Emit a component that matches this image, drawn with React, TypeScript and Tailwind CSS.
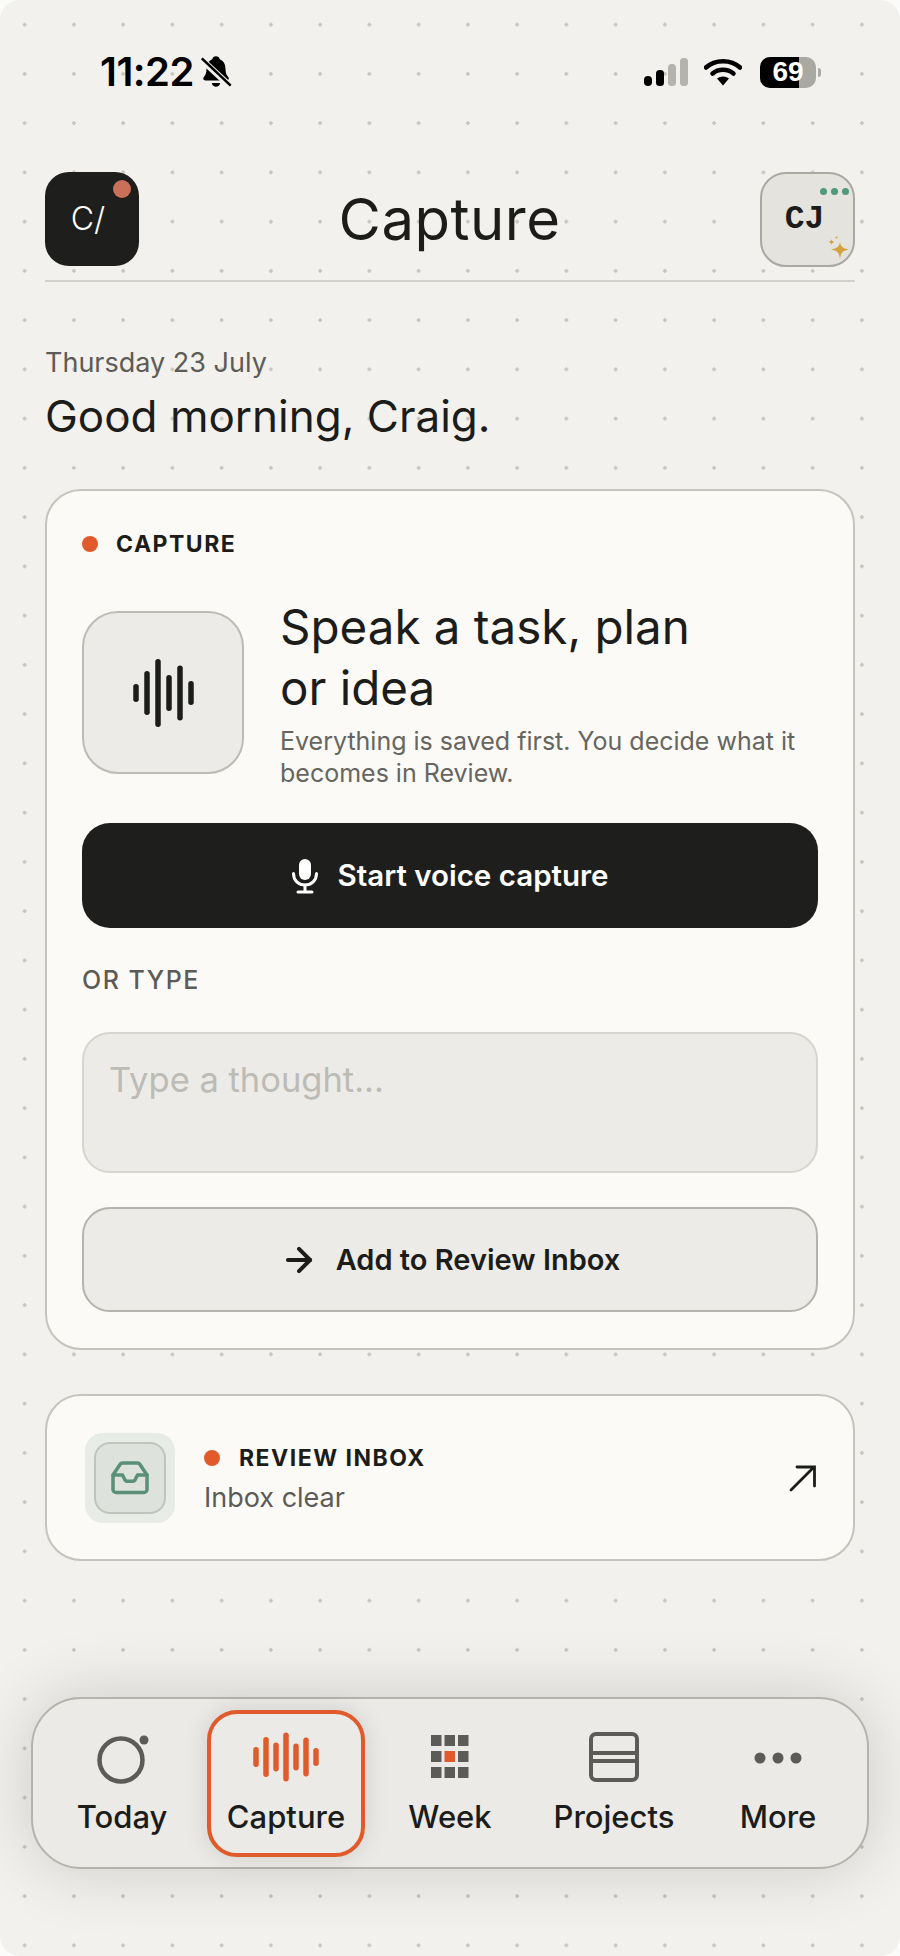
import { ArrowRight } from "lucide-react";

const FONT = "font-['Inter',_'Noto_Sans',_sans-serif]";

const CAPTURE_BARS = [
  { x: 3, h: 18 },
  { x: 14, h: 44 },
  { x: 25, h: 68 },
  { x: 36, h: 36 },
  { x: 47, h: 55 },
  { x: 58, h: 24 },
];

const NAV_BARS = [
  { x: 3, h: 20 },
  { x: 13, h: 40 },
  { x: 23, h: 29 },
  { x: 33, h: 49 },
  { x: 43, h: 27 },
  { x: 53, h: 39 },
  { x: 63, h: 18 },
];

function Bars({ bars, width, height, color }: { bars: { x: number; h: number }[]; width: number; height: number; color: string }) {
  return (
    <svg width={width} height={height} viewBox={`0 0 ${width} ${height}`}>
      {bars.map((b) => (
        <rect key={b.x} x={b.x - 2.75} y={(height - b.h) / 2} width={5.5} height={b.h} rx={2.75} fill={color} />
      ))}
    </svg>
  );
}

function BellOff() {
  return (
    <svg width="30" height="32" viewBox="0 0 30 32" className="ml-[7px] scale-[1.05]">
      <path d="M15 1c2 0 3.2 1.2 3.6 2.8 3.6 1.4 5.4 4.6 5.4 8.8 0 4 1 6.400 2.600 8.200 1.200 1.400 0.400 3.200-1.400 3.200H4.800c-1.800 0-2.600-1.800-1.400-3.200C5 19 6 16.600 6 12.600c0-4.200 1.800-7.400 5.400-8.800C11.800 2.200 13 1 15 1z" fill="#000" />
      <path d="M11 26.500h8c-.4 2.400-2 3.500-4 3.500s-3.600-1.100-4-3.500z" fill="#000" />
      <path d="M1 4l28 26" stroke="#f2f1ed" strokeWidth="6" />
      <path d="M1.500 3l27.500 26" stroke="#000" strokeWidth="2.500" />
    </svg>
  );
}

function StatusIcons() {
  return (
    <div className="flex items-center">
      <svg width="44" height="28" viewBox="0 0 44 28">
        <rect x="0" y="18" width="8" height="10" rx="4" fill="#000" />
        <rect x="12" y="12" width="8" height="16" rx="3.500" fill="#000" />
        <rect x="24" y="6" width="8" height="22" rx="3.500" fill="#b4b3ad" />
        <rect x="36" y="0" width="8" height="28" rx="3.500" fill="#b4b3ad" />
      </svg>
      <svg width="38" height="28" viewBox="0 0 38 28" className="ml-[16px]">
        <path d="M2 9.500C11 1 27 1 36 9.500" fill="none" stroke="#000" strokeWidth="4.500" strokeLinecap="round" />
        <path d="M8.500 15.500c6-5 15-5 21 0" fill="none" stroke="#000" strokeWidth="4.500" strokeLinecap="round" />
        <path d="M13 20.500c3.500-2.800 8.500-2.800 12 0L19 27.500z" fill="#000" />
      </svg>
      <div className="ml-[18px] relative w-[56px] h-[31px] rounded-[10px] bg-[#a9a8a2] overflow-hidden">
        <div className="absolute inset-y-0 left-0 w-[39px] bg-black" />
        <span className="absolute inset-0 flex items-center justify-center text-white text-[28px] font-bold leading-none font-['Liberation_Sans',_sans-serif]">69</span>
      </div>
      <div className="ml-[2px] w-[3px] h-[9px] rounded-r-full bg-[#a9a8a2]" />
    </div>
  );
}

function TodayIcon() {
  return (
    <svg width="60" height="54" viewBox="0 0 60 54" className="ml-[3px]">
      <circle cx="27" cy="30" r="21.500" fill="none" stroke="#5c5b57" strokeWidth="4.500" />
      <circle cx="50" cy="10" r="4.500" fill="#5c5b57" />
    </svg>
  );
}

function WeekIcon() {
  const cols = [0, 13.500, 27];
  const rows = [0, 16, 32];
  return (
    <svg width="38" height="43" viewBox="0 0 38 43">
      {rows.map((y, r) =>
        cols.map((x, c) => (
          <rect key={`${r}-${c}`} x={x} y={y} width="10.500" height="11" fill={r === 1 && c === 1 ? "#e05a2b" : "#5c5b57"} />
        ))
      )}
    </svg>
  );
}

function ProjectsIcon() {
  return (
    <svg width="52" height="52" viewBox="0 0 52 52" fill="none" stroke="#5c5b57" strokeWidth="4">
      <rect x="3" y="3" width="46" height="46" rx="5" />
      <path d="M3 22h46M3 30h46" />
    </svg>
  );
}

function MoreIcon() {
  return (
    <svg width="48" height="12" viewBox="0 0 48 12" fill="#5c5b57" className="mt-[3px]">
      <circle cx="6" cy="6" r="5.500" />
      <circle cx="24" cy="6" r="5.500" />
      <circle cx="42" cy="6" r="5.500" />
    </svg>
  );
}

function InboxIcon() {
  return (
    <svg width="38" height="34" viewBox="0 0 38 34" fill="none" stroke="#5a8f78" strokeWidth="3.500" strokeLinejoin="round" strokeLinecap="round">
      <path d="M2 14 9 3.500c.6-1 1.500-1.500 2.500-1.500h15c1 0 1.900.5 2.500 1.500L36 14v14.500c0 1.700-1.300 3-3 3H5c-1.700 0-3-1.300-3-3z" />
      <path d="M2 14h9.500l2.500 5c.5.800 1 1.200 2 1.200h6c1 0 1.500-.4 2-1.200l2.500-5H36" />
    </svg>
  );
}

function MicIcon() {
  return (
    <svg width="28" height="36" viewBox="0 0 28 36" fill="none" stroke="#fff" strokeWidth="3" strokeLinecap="round">
      <rect x="8" y="1" width="12" height="21" rx="6" fill="#fff" stroke="none" />
      <path d="M2.500 15.500c0 7 5 11.500 11.500 11.500s11.500-4.500 11.500-11.500" />
      <path d="M14 27v6M7 34h14" />
    </svg>
  );
}

function Sparkle() {
  return (
    <svg width="22" height="24" viewBox="0 0 22 24" fill="#d4a13f">
      <path d="M13 6c.8 4.500 2.500 6.300 9 7.500-6.500 1.200-8.200 3-9 10-.8-7-2.500-8.800-9-10 6.500-1.200 8.200-3 9-7.500z" />
      <path d="M4.500 3c.3 1.800 1 2.600 3 3-2 .4-2.700 1.200-3 3-.3-1.800-1-2.600-3-3 2-.4 2.700-1.200 3-3z" />
      <circle cx="9.500" cy="1.500" r="1" />
    </svg>
  );
}

function NavItem({ label, active, children }: { label: string; active?: boolean; children: React.ReactNode }) {
  return (
    <div
      className={
        active
          ? "h-[147px] mx-[3px] rounded-[30px] border-4 border-[#e05a2b] bg-[#ebeae6] shadow-[0_0_24px_rgba(0,0,0,0.12)] flex flex-col items-center"
          : "h-[147px] flex flex-col items-center border-4 border-transparent"
      }
    >
      <div className="h-[85px] flex items-center justify-center">{children}</div>
      <span className="text-[31px] leading-[36px] font-medium text-[#1c1c1a] whitespace-nowrap">{label}</span>
    </div>
  );
}

export default function App() {
  return (
    <div className={`${FONT} w-[900px] h-[1956px] bg-[#fbfbf9]`}>
      <div className="w-full h-full rounded-[20px] overflow-hidden flex flex-col bg-[#f2f1ed] bg-[radial-gradient(circle,#c6c5bf_1.5px,transparent_2px)] bg-[length:49.25px_49.25px]">
        {/* status bar */}
        <div className="h-[172px] shrink-0 pl-[100px] pr-[79px] pt-[53px]">
          <div className="flex items-center justify-between h-[38px]">
            <div className="flex items-center">
              <span className="text-[40px] leading-none font-semibold text-black tracking-[-0.5px]">11:22</span>
              <BellOff />
            </div>
            <StatusIcons />
          </div>
        </div>

        {/* header */}
        <header className="mx-[45px] h-[110px] shrink-0 border-b-2 border-[#d3d1cc] flex items-start justify-between">
          <div className="relative w-[94px] h-[94px] rounded-[24px] bg-[#1e1e1c] flex items-center justify-center">
            <span className="text-white text-[32px] font-light pr-[8px]">C/</span>
            <div className="absolute top-[8px] right-[8px] w-[18px] h-[18px] rounded-full bg-[#c9705a]" />
          </div>
          <h1 className="text-[58px] leading-[94px] font-normal text-[#1c1c1a] tracking-[0.5px]">Capture</h1>
          <div className="relative w-[95px] h-[95px] rounded-[26px] bg-[#e4e3de] border-[2px] border-[#a9a8a2] flex items-center justify-center">
            <span className="font-['Liberation_Mono',_monospace] text-[33px] font-bold text-[#1c1c1a] pr-[6px]">CJ</span>
            <div className="absolute top-[14px] right-[4px] flex gap-[4px]">
              <div className="w-[7px] h-[7px] rounded-full bg-[#4f9a7c]" />
              <div className="w-[7px] h-[7px] rounded-full bg-[#4f9a7c]" />
              <div className="w-[7px] h-[7px] rounded-full bg-[#4f9a7c]" />
            </div>
            <div className="absolute bottom-[5px] right-[4px]">
              <Sparkle />
            </div>
          </div>
        </header>

        {/* greeting */}
        <div className="mx-[45px] mt-[65px]">
          <p className="text-[27px] leading-[32px] text-[#5c5b57]">Thursday 23 July</p>
          <p className="mt-[13px] text-[44px] leading-[48px] text-[#1c1c1a]">Good morning, Craig.</p>
        </div>

        {/* capture card */}
        <section className="mx-[45px] mt-[49px] h-[861px] shrink-0 rounded-[36px] border-2 border-[#c4c3bd] bg-[#fbfaf6] px-[35px]">
          <div className="flex items-center h-[30px] mt-[38px]">
            <div className="w-[16px] h-[16px] rounded-full bg-[#e05a2b]" />
            <span className="ml-[18px] text-[23px] font-bold tracking-[1.5px] text-[#1c1c1a]">CAPTURE</span>
          </div>

          <div className="mt-[52px] flex items-start">
            <div className="w-[162px] h-[163px] shrink-0 rounded-[36px] border-[2px] border-[#bcbbb5] bg-[#ecebe7] flex items-center justify-center">
              <Bars bars={CAPTURE_BARS} width={61} height={70} color="#1c1c1a" />
            </div>
            <div className="ml-[36px] -mt-[15px]">
              <h2 className="text-[47.500px] leading-[61px] font-normal text-[#1c1c1a]">
                Speak a task, plan
                <br />
                or idea
              </h2>
              <p className="mt-[7px] text-[25px] leading-[32px] text-[#66655f]">
                Everything is saved first. You decide what it
                <br />
                becomes in Review.
              </p>
            </div>
          </div>

          <button className="mt-[34px] w-full h-[105px] rounded-[28px] bg-[#1e1e1c] text-white flex items-center justify-center gap-[18px]">
            <MicIcon />
            <span className="text-[29.500px] font-semibold">Start voice capture</span>
          </button>

          <p className="mt-[37px] text-[25px] leading-[30px] font-medium tracking-[1.500px] text-[#5c5b57]">OR TYPE</p>

          <textarea
            placeholder="Type a thought..."
            className="mt-[37px] block w-full h-[141px] rounded-[28px] border-2 border-[#d6d5cf] bg-[#ecebe7] px-[25px] py-[26px] text-[34.500px] leading-[40px] placeholder:text-[#bcbbb5] resize-none outline-none"
          />

          <button className="mt-[34px] w-full h-[105px] rounded-[28px] border-[2px] border-[#b4b3ad] bg-[#ecebe7] text-[#1c1c1a] flex items-center justify-center gap-[18px]">
            <ArrowRight size={38} strokeWidth={2.500} />
            <span className="text-[29px] font-semibold">Add to Review Inbox</span>
          </button>
        </section>

        {/* review inbox */}
        <section className="mx-[45px] mt-[44px] h-[167px] shrink-0 rounded-[36px] border-2 border-[#c4c3bd] bg-[#fbfaf6] flex items-center pl-[38px] pr-[36px]">
          <div className="w-[90px] h-[90px] shrink-0 rounded-[18px] bg-[#e7ece6] flex items-center justify-center">
            <div className="w-[72px] h-[72px] rounded-[16px] border-2 border-[#bfc4bd] bg-[#dde2dc] flex items-center justify-center">
              <InboxIcon />
            </div>
          </div>
          <div className="ml-[29px] flex-1">
            <div className="flex items-center">
              <div className="w-[16px] h-[16px] rounded-full bg-[#e05a2b]" />
              <span className="ml-[19px] text-[23px] leading-[30px] font-bold tracking-[1.500px] text-[#1c1c1a]">REVIEW INBOX</span>
            </div>
            <p className="mt-[10px] text-[27px] leading-[30px] text-[#5c5b57]">Inbox clear</p>
          </div>
          <svg width="28" height="28" viewBox="0 0 28 28" fill="none" stroke="#1c1c1a" strokeWidth="2.800" strokeLinecap="round">
            <path d="M2 26 25 3M8 3h17.500v19" />
          </svg>
        </section>

        {/* bottom nav */}
        <nav className="mx-[31px] mt-auto mb-[87px] h-[172px] shrink-0 rounded-[50px] border-[2px] border-[#b4b3ad] bg-[#ebeae6] shadow-[0_0_70px_rgba(0,0,0,0.16)] grid grid-cols-5 px-[7px] pt-[11px]">
          <NavItem label="Today">
            <TodayIcon />
          </NavItem>
          <NavItem label="Capture" active>
            <Bars bars={NAV_BARS} width={66} height={50} color="#e05a2b" />
          </NavItem>
          <NavItem label="Week">
            <WeekIcon />
          </NavItem>
          <NavItem label="Projects">
            <ProjectsIcon />
          </NavItem>
          <NavItem label="More">
            <MoreIcon />
          </NavItem>
        </nav>
      </div>
    </div>
  );
}
